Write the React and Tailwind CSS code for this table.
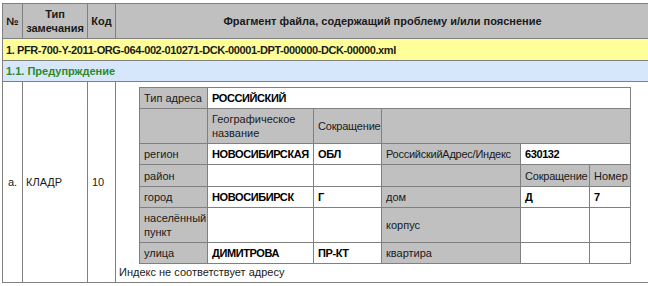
const gray = 'border border-[#808080] bg-[#c0c0c0] px-[4px] py-[3px] font-normal text-left';
const white = 'border border-[#808080] bg-white px-[4px] py-[3px] font-bold tracking-[-0.4px] text-black';

const AddressTable = () => (
  <table className="ml-[20px] mt-[2px] w-[491px] table-fixed border-collapse">
    <colgroup>
      <col className="w-[68px]" />
      <col className="w-[106px]" />
      <col className="w-[68px]" />
      <col className="w-[139px]" />
      <col className="w-[69px]" />
      <col className="w-[41px]" />
    </colgroup>
    <tbody>
      <tr className="h-[21px]">
        <td className={gray}>Тип адреса</td>
        <td className={white} colSpan={5}>РОССИЙСКИЙ</td>
      </tr>
      <tr className="h-[35px]">
        <td className={gray}></td>
        <td className={gray}>Географическое название</td>
        <td className={`${gray} whitespace-nowrap tracking-[-0.2px]`}>Сокращение</td>
        <td className={gray} colSpan={3}></td>
      </tr>
      <tr className="h-[19px]">
        <td className={gray}>регион</td>
        <td className={white}>НОВОСИБИРСКАЯ</td>
        <td className={white}>ОБЛ</td>
        <td className={`${gray} whitespace-nowrap tracking-[-0.25px]`}>РоссийскийАдрес/Индекс</td>
        <td className={white} colSpan={2}>630132</td>
      </tr>
      <tr className="h-[22px]">
        <td className={gray}>район</td>
        <td className={white}></td>
        <td className={white}></td>
        <td className={gray}></td>
        <td className={`${gray} whitespace-nowrap tracking-[-0.2px]`}>Сокращение</td>
        <td className={`${gray} whitespace-nowrap`}>Номер</td>
      </tr>
      <tr className="h-[21px]">
        <td className={gray}>город</td>
        <td className={white}>НОВОСИБИРСК</td>
        <td className={white}>Г</td>
        <td className={gray}>дом</td>
        <td className={white}>Д</td>
        <td className={white}>7</td>
      </tr>
      <tr className="h-[35px]">
        <td className={gray}>населённый пункт</td>
        <td className={white}></td>
        <td className={white}></td>
        <td className={gray}>корпус</td>
        <td className={white}></td>
        <td className={white}></td>
      </tr>
      <tr className="h-[21px]">
        <td className={gray}>улица</td>
        <td className={white}>ДИМИТРОВА</td>
        <td className={white}>ПР-КТ</td>
        <td className={gray}>квартира</td>
        <td className={white}></td>
        <td className={white}></td>
      </tr>
    </tbody>
  </table>
);

export default function App() {
  const cell = 'border border-[#808080]';
  return (
    <div className="w-[648px] h-[286px] overflow-hidden bg-white pt-[3px] pl-[2px] text-[11px] leading-[14px] text-[#1a1a1a] [font-family:'Liberation_Sans',Arial,sans-serif]">
      <table className="w-[648px] table-fixed border-collapse">
        <colgroup>
          <col className="w-[20px]" />
          <col className="w-[65px]" />
          <col className="w-[28px]" />
          <col />
        </colgroup>
        <thead>
          <tr className="h-[35px] bg-[#c0c0c0]">
            <th className={`${cell} px-[2px] py-[3px] font-bold`}>№</th>
            <th className={`${cell} px-[2px] py-[3px] font-bold`}>Тип замечания</th>
            <th className={`${cell} px-[2px] py-[3px] font-bold`}>Код</th>
            <th className={`${cell} px-[3px] py-[3px] font-bold`}>Фрагмент файла, содержащий проблему и/или пояснение</th>
          </tr>
        </thead>
        <tbody>
          <tr className="h-[22px] bg-[#ffff99]">
            <td className={`${cell} px-[3px] font-bold tracking-[-0.4px]`} colSpan={4}>
              1. PFR-700-Y-2011-ORG-064-002-010271-DCK-00001-DPT-000000-DCK-00000.xml
            </td>
          </tr>
          <tr className="h-[21px] bg-[#d7e7fb]">
            <td className={`${cell} px-[3px] font-bold text-[#2a8a2a]`} colSpan={4}>
              1.1. Предупрждение
            </td>
          </tr>
          <tr className="h-[200px]">
            <td className={`${cell} px-[3px] text-center align-middle`}>a.</td>
            <td className={`${cell} px-[3px] align-middle`}>КЛАДР</td>
            <td className={`${cell} px-[4px] align-middle`}>10</td>
            <td className={`${cell} p-[3px] align-top`}>
              <AddressTable />
              <div className="mt-[1px]">Индекс не соответствует адресу</div>
            </td>
          </tr>
        </tbody>
      </table>
    </div>
  );
}
